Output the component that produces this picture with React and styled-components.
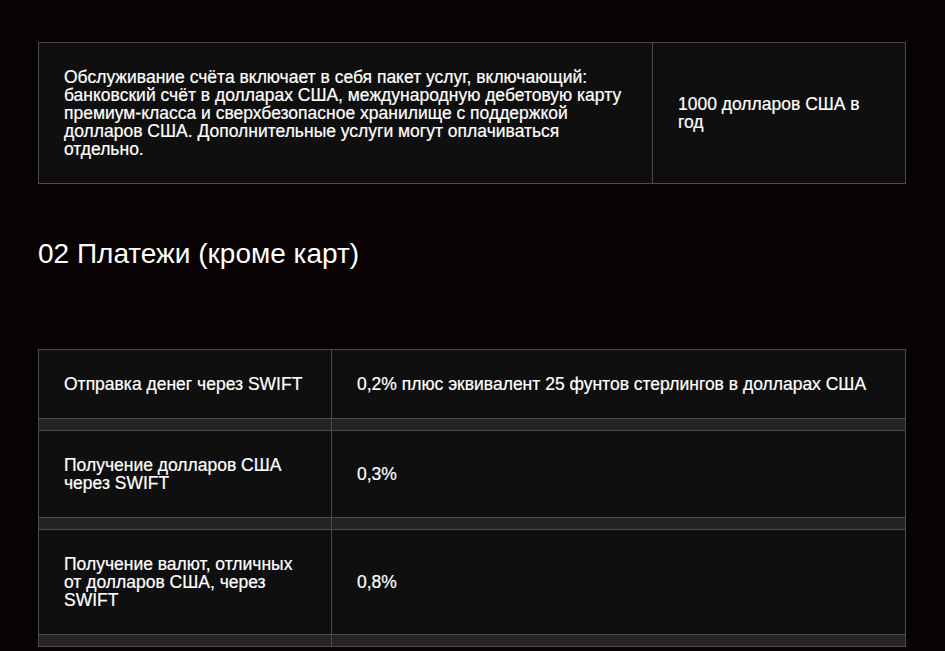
import React from 'react';
import styled, { createGlobalStyle } from 'styled-components';

const Global = createGlobalStyle`
  html, body {
    margin: 0;
    background: #080302;
  }
  body {
    font-family: "Liberation Sans", Arial, sans-serif;
    color: #ffffff;
  }
`;

const Page = styled.main`
  padding: 42px 39px 0 38px;
`;

const Table = styled.table`
  width: 100%;
  border-collapse: collapse;
  background: #0f0f0f;
  table-layout: fixed;
`;

const Col = styled.col`
  width: ${p => p.$width || 'auto'};
`;

const Cell = styled.td`
  border: 1px solid #4b4b4b;
  padding: 25px 26px 25px 25px;
  font-size: 17.5px;
  line-height: 18px;
  vertical-align: middle;
  -webkit-text-stroke: 0.2px #ffffff;
`;

const Spacer = styled.td`
  border: 1px solid #4b4b4b;
  background: #242424;
  height: 11px;
  padding: 0;
`;

const Heading = styled.h2`
  margin: 52px 0 77px;
  font-size: 28px;
  font-weight: 400;
  line-height: 36px;
`;

const payments = [
  ['Отправка денег через SWIFT', '0,2% плюс эквивалент 25 фунтов стерлингов в долларах США'],
  ['Получение долларов США через SWIFT', '0,3%'],
  ['Получение валют, отличных от долларов США, через SWIFT', '0,8%'],
];

export default function App() {
  return (
    <>
      <Global />
      <Page>
        <Table>
          <colgroup>
            <Col $width="614px" />
            <Col />
          </colgroup>
          <tbody>
            <tr>
              <Cell>
                Обслуживание счёта включает в себя пакет услуг, включающий:
                банковский счёт в долларах США, международную дебетовую карту
                премиум-класса и сверхбезопасное хранилище с поддержкой
                долларов США. Дополнительные услуги могут оплачиваться
                отдельно.
              </Cell>
              <Cell>1000 долларов США в год</Cell>
            </tr>
          </tbody>
        </Table>

        <Heading>02 Платежи (кроме карт)</Heading>

        <Table>
          <colgroup>
            <Col $width="293px" />
            <Col />
          </colgroup>
          <tbody>
            {payments.map(([name, fee]) => (
              <React.Fragment key={name}>
                <tr>
                  <Cell>{name}</Cell>
                  <Cell>{fee}</Cell>
                </tr>
                <tr>
                  <Spacer />
                  <Spacer />
                </tr>
              </React.Fragment>
            ))}
          </tbody>
        </Table>
      </Page>
    </>
  );
}
